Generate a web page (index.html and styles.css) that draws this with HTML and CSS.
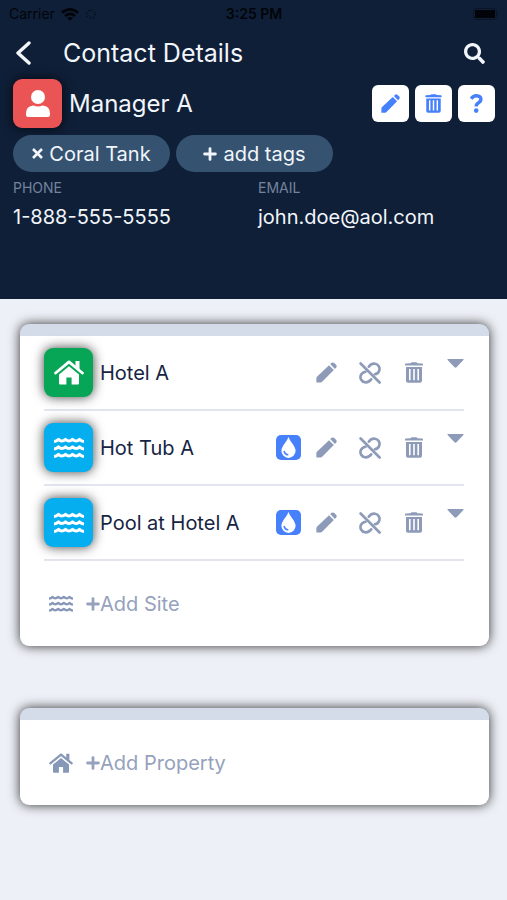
FILE: index.html
```html
<!DOCTYPE html>
<html lang="en">
<head>
<meta charset="utf-8">
<meta name="viewport" content="width=device-width, initial-scale=1">
<title>Contact Details</title>
<link rel="stylesheet" href="styles.css">
</head>
<body>
<svg class="sprite" aria-hidden="true">
  <symbol id="pencil" viewBox="0 0 21 21">
    <path d="M0.4 20.6V16.2Q0.4 15.2 1.2 14.4L13 3.2L17.8 8L6.4 19.6Q5.4 20.6 4.4 20.6Z"/>
    <path d="M14.2 2.1L15.7 0.8Q17 -0.1 18.3 1L20.2 2.9Q21.2 4.1 20.2 5.4L18.9 6.9Z"/>
  </symbol>
  <symbol id="trash" viewBox="0 0 18 21">
    <path d="M5.5 1.2Q6 0.2 7 0.2H11Q12 0.2 12.5 1.2L17.2 1.5Q18 1.6 18 2.4V3.6H0V2.4Q0 1.6 0.8 1.5Z"/>
    <path fill-rule="evenodd" d="M1 5H17V18.8Q17 20.8 15 20.8H3Q1 20.8 1 18.8ZM4 7V18.3H5.6V7ZM8.2 7V18.3H9.8V7ZM12.4 7V18.3H14V7Z"/>
  </symbol>
  <symbol id="unlink" viewBox="0 0 22 22">
    <g fill="none" stroke="currentColor" stroke-width="2.600" stroke-linecap="round">
      <path d="M9.800 4.600C11.500 2.400 13.600 1.400 16 1.700C19.400 2.200 21.300 5.600 20.200 8.700C19.500 10.700 17.700 12 15.800 12.300"/>
      <path d="M12.200 17.400C10.500 19.600 8.400 20.600 6 20.300C2.600 19.800 0.700 16.400 1.800 13.300C2.500 11.300 4.300 10 6.600 9.700"/>
      <path d="M1.600 1.500L20.600 20.500"/>
    </g>
  </symbol>
  <symbol id="waves" viewBox="0 0 30 21">
    <g fill="none" stroke="currentColor" stroke-width="3" stroke-linejoin="round">
      <path id="wave" d="M0 4.400Q2.500 4.200 4.500 2.300Q7.500 5.800 11.500 2.300Q15 5.800 18.500 2.300Q22.500 5.800 25.500 2.300Q27.500 4.200 30 4.400"/>
      <use href="#wave" y="7.500"/>
      <use href="#wave" y="15"/>
    </g>
  </symbol>
  <symbol id="house" viewBox="0 0 30 25">
    <path fill="none" stroke="currentColor" stroke-width="2.800" stroke-linecap="round" stroke-linejoin="round" d="M1.600 13L15 1.900L28.400 13"/>
    <path d="M21.500 1H25.500V9.600L21.500 6.300Z"/>
    <path d="M15 6.200L25 14.500V23.500Q25 24.600 23.900 24.600H17.600V17.500H12.400V24.600H6.100Q5 24.600 5 23.500V14.500Z"/>
  </symbol>
  <symbol id="plus" viewBox="0 0 14 14">
    <path fill="none" stroke="currentColor" stroke-width="2.800" stroke-linecap="round" d="M7 1.600V12.400M1.600 7H12.400"/>
  </symbol>
  <symbol id="drop" viewBox="0 0 25 25">
    <path fill="#fff" d="M12.500 1.800C13.300 6 19.600 11 19.600 15.800A7.100 7.100 0 0 1 5.400 15.800C5.400 11 11.700 6 12.500 1.800Z"/>
    <path fill="none" stroke="currentColor" stroke-width="1.500" stroke-linecap="round" d="M8.200 16.500Q8.800 19.300 11.700 19.800"/>
  </symbol>
  <symbol id="caret" viewBox="0 0 17 9">
    <path d="M1 0H16Q17 0.200 16.400 1.100L9.500 8.300Q8.500 9.200 7.500 8.300L0.600 1.100Q0 0.200 1 0Z"/>
  </symbol>
</svg>

<header class="header">
  <div class="status">
    <div class="status-left">
      <span>Carrier</span>
      <svg width="18" height="13" viewBox="0 0 18 13" aria-hidden="true"><g fill="none" stroke="currentColor" stroke-width="2.600"><path d="M1 4.800Q9 -2 17 4.800"/><path d="M4 8Q9 3.800 14 8"/></g><path d="M9 12.800L6.200 10Q9 8 11.800 10Z"/></svg>
      <svg class="spinner" width="12" height="12" viewBox="0 0 12 12" aria-hidden="true"><circle cx="6" cy="6" r="4" fill="none" stroke="currentColor" stroke-width="2" stroke-dasharray="1 2.140"/></svg>
    </div>
    <time class="clock">3:25 PM</time>
    <div class="status-right">
      <svg width="26" height="12" viewBox="0 0 26 12" aria-hidden="true"><rect x="0.500" y="0.500" width="23" height="11" rx="3" fill="none" stroke="currentColor" opacity="0.400"/><rect x="2" y="2" width="20" height="8" rx="1"/><path d="M24.500 4Q26 6 24.500 8Z" opacity="0.400"/></svg>
    </div>
  </div>

  <div class="titlebar">
    <button class="plain back" aria-label="Back"><svg width="16" height="24" viewBox="0 0 16 24"><path fill="none" stroke="currentColor" stroke-width="3.400" stroke-linecap="round" stroke-linejoin="round" d="M13 2L2 12L13 22"/></svg></button>
    <h1 class="title">Contact Details</h1>
    <button class="plain" aria-label="Search"><svg width="21" height="21" viewBox="0 0 512 512"><path d="M505 442.700L405.300 343c-4.500-4.500-10.600-7-17-7H372c27.600-35.300 44-79.700 44-128C416 93.100 322.900 0 208 0S0 93.100 0 208s93.100 208 208 208c48.300 0 92.700-16.400 128-44v16.300c0 6.400 2.500 12.500 7 17l99.700 99.700c9.400 9.400 24.600 9.400 33.900 0l28.300-28.300c9.400-9.400 9.400-24.600.1-34zM208 336c-70.700 0-128-57.200-128-128 0-70.700 57.200-128 128-128 70.700 0 128 57.200 128 128 0 70.700-57.200 128-128 128z"/></svg></button>
  </div>

  <div class="contact">
    <span class="tile tile-person"><svg width="24" height="27" viewBox="0 0 24 27" aria-hidden="true"><circle cx="12" cy="7" r="7"/><path d="M7.500 15.500Q12 17.600 16.500 15.500Q24 16 24 23.500V25Q24 27 22 27H2Q0 27 0 25V23.500Q0 16 7.500 15.500Z"/></svg></span>
    <h2 class="contact-name">Manager A</h2>
    <div class="contact-actions">
      <button class="square" aria-label="Edit contact"><svg width="19" height="19"><use href="#pencil"/></svg></button>
      <button class="square" aria-label="Delete contact"><svg width="17" height="19"><use href="#trash"/></svg></button>
      <button class="square" aria-label="Help"><svg width="13" height="19" viewBox="0 0 13 19"><path fill="none" stroke="currentColor" stroke-width="3.400" d="M1.200 4.800Q3 1.700 6.300 1.700Q10.900 1.800 10.900 5.300Q10.900 7.500 8.300 8.900Q6.200 10 6.200 12.600"/><circle cx="6.200" cy="16.600" r="2.300"/></svg></button>
    </div>
  </div>

  <div class="tags">
    <button class="tag"><svg width="11" height="11" viewBox="0 0 11 11" aria-hidden="true"><path fill="none" stroke="currentColor" stroke-width="2.600" d="M1 1L10 10M10 1L1 10"/></svg>Coral Tank</button>
    <button class="tag"><svg width="14" height="14" aria-hidden="true"><use href="#plus"/></svg>add tags</button>
  </div>

  <dl class="details">
    <div><dt>PHONE</dt><dd>1-888-555-5555</dd></div>
    <div><dt>EMAIL</dt><dd>john.doe@aol.com</dd></div>
  </dl>
</header>

<main class="content">
  <section class="card" aria-label="Sites">
    <ul class="rows">
      <li class="row">
        <span class="tile tile-hotel"><svg width="30" height="25" aria-hidden="true"><use href="#house"/></svg></span>
        <span class="row-name">Hotel A</span>
        <button class="plain action" aria-label="Edit"><svg width="21" height="21"><use href="#pencil"/></svg></button>
        <button class="plain action" aria-label="Unlink"><svg width="22" height="22"><use href="#unlink"/></svg></button>
        <button class="plain action" aria-label="Delete"><svg width="18" height="21"><use href="#trash"/></svg></button>
        <button class="plain expand" aria-label="Expand"><svg width="17" height="9"><use href="#caret"/></svg></button>
      </li>
      <li class="row">
        <span class="tile tile-water"><svg width="30" height="21" aria-hidden="true"><use href="#waves"/></svg></span>
        <span class="row-name">Hot Tub A</span>
        <button class="plain drop" aria-label="Water test"><svg width="25" height="25"><use href="#drop"/></svg></button>
        <button class="plain action" aria-label="Edit"><svg width="21" height="21"><use href="#pencil"/></svg></button>
        <button class="plain action" aria-label="Unlink"><svg width="22" height="22"><use href="#unlink"/></svg></button>
        <button class="plain action" aria-label="Delete"><svg width="18" height="21"><use href="#trash"/></svg></button>
        <button class="plain expand" aria-label="Expand"><svg width="17" height="9"><use href="#caret"/></svg></button>
      </li>
      <li class="row">
        <span class="tile tile-water"><svg width="30" height="21" aria-hidden="true"><use href="#waves"/></svg></span>
        <span class="row-name">Pool at Hotel A</span>
        <button class="plain drop" aria-label="Water test"><svg width="25" height="25"><use href="#drop"/></svg></button>
        <button class="plain action" aria-label="Edit"><svg width="21" height="21"><use href="#pencil"/></svg></button>
        <button class="plain action" aria-label="Unlink"><svg width="22" height="22"><use href="#unlink"/></svg></button>
        <button class="plain action" aria-label="Delete"><svg width="18" height="21"><use href="#trash"/></svg></button>
        <button class="plain expand" aria-label="Expand"><svg width="17" height="9"><use href="#caret"/></svg></button>
      </li>
    </ul>
    <button class="plain add"><svg class="add-icon" width="24" height="17" aria-hidden="true"><use href="#waves"/></svg><svg width="14" height="14" aria-hidden="true"><use href="#plus"/></svg>Add Site</button>
  </section>

  <section class="card" aria-label="Properties">
    <button class="plain add"><svg class="add-icon" width="24" height="20" aria-hidden="true"><use href="#house"/></svg><svg width="14" height="14" aria-hidden="true"><use href="#plus"/></svg>Add Property</button>
  </section>
</main>
</body>
</html>
```
FILE: styles.css
```css
* {
  box-sizing: border-box;
}

body {
  margin: 0;
  min-height: 100vh;
  background: #edf0f6;
  color: #162443;
  font-family: Inter, Roboto, "Liberation Sans", sans-serif;
  font-size: 20px;
  line-height: 28px;
}

h1, h2, ul, dl, dd {
  margin: 0;
  padding: 0;
  font-weight: 400;
}

svg {
  display: block;
  flex: none;
  fill: currentColor;
}

.sprite {
  position: absolute;
  width: 0;
  height: 0;
}

button {
  font: inherit;
  cursor: pointer;
}

.plain {
  display: flex;
  align-items: center;
  padding: 0;
  border: 0;
  background: none;
  color: inherit;
}

.header {
  padding: 0 12px 68px 13px;
  background: #0f1f38;
  color: #f2f6fb;
}

.status {
  display: grid;
  grid-template-columns: 1fr auto 1fr;
  align-items: center;
  height: 28px;
  margin: 0 -4px;
  color: #020409;
  font-size: 14px;
}

.status-left {
  display: flex;
  align-items: center;
  gap: 6px;
}

.spinner {
  opacity: 0.6;
}

.clock {
  font-weight: 600;
}

.status-right {
  justify-self: end;
}

.titlebar {
  display: flex;
  align-items: center;
  height: 50px;
  padding: 0 10px 0 3px;
}

.back {
  width: 47px;
}

.title {
  flex: 1;
  font-size: 25px;
}

.contact {
  display: flex;
  align-items: center;
  padding: 1px 0 7px;
}

.contact-name {
  flex: 1;
  margin-left: 7px;
  font-size: 24px;
}

.contact-actions {
  display: flex;
  gap: 6px;
}

.square {
  display: grid;
  place-items: center;
  width: 37px;
  height: 37px;
  padding: 0;
  border: 0;
  border-radius: 6px;
  background: #fff;
  color: #4680fb;
}

.tile {
  display: grid;
  place-items: center;
  flex: none;
  width: 49px;
  height: 49px;
  border-radius: 9px;
  color: #fff;
  box-shadow: 0 0 12px rgba(0, 0, 0, 0.75);
}

.tile-person {
  background: #ea5455;
}

.tile-hotel {
  background: #07a656;
}

.tile-water {
  background: #05aeef;
}

.tags {
  display: flex;
  gap: 6px;
}

.tag {
  display: flex;
  align-items: center;
  justify-content: center;
  gap: 6px;
  min-width: 157px;
  height: 37px;
  padding: 0 18px;
  border: 0;
  border-radius: 19px;
  background: #355370;
  color: #f2f6fb;
}

.details {
  display: grid;
  grid-template-columns: 1fr 1fr;
  gap: 8px;
  margin-top: 8px;
}

dt {
  color: #74839f;
  font-size: 14px;
  line-height: 16px;
}

dd {
  margin-top: 7px;
}

.content {
  display: grid;
  gap: 62px;
  padding: 25px 18px 60px 20px;
}

.card {
  padding: 0 25px 0 24px;
  border-top: 12px solid #d4dbe9;
  border-radius: 9px;
  background: #fff;
  box-shadow: 0 0 12px rgba(0, 0, 0, 0.8);
}

.rows {
  list-style: none;
}

.row {
  display: flex;
  align-items: center;
  padding: 12px 0;
  border-bottom: 2px solid #e2e5ee;
}

.row-name {
  flex: 1;
  margin-left: 7px;
}

.action {
  justify-content: center;
  width: 44px;
  color: #8d9bb8;
}

.drop {
  margin-right: 3px;
  border-radius: 5px;
  background: #4680fb;
  color: #4680fb;
}

.expand {
  align-self: flex-start;
  margin: 11px 0 0 11px;
  color: #8d9bb8;
}

.add {
  height: 85px;
  padding-left: 5px;
  color: #95a1bd;
}

.add-icon {
  margin-right: 13px;
  color: #8797b7;
}
```
